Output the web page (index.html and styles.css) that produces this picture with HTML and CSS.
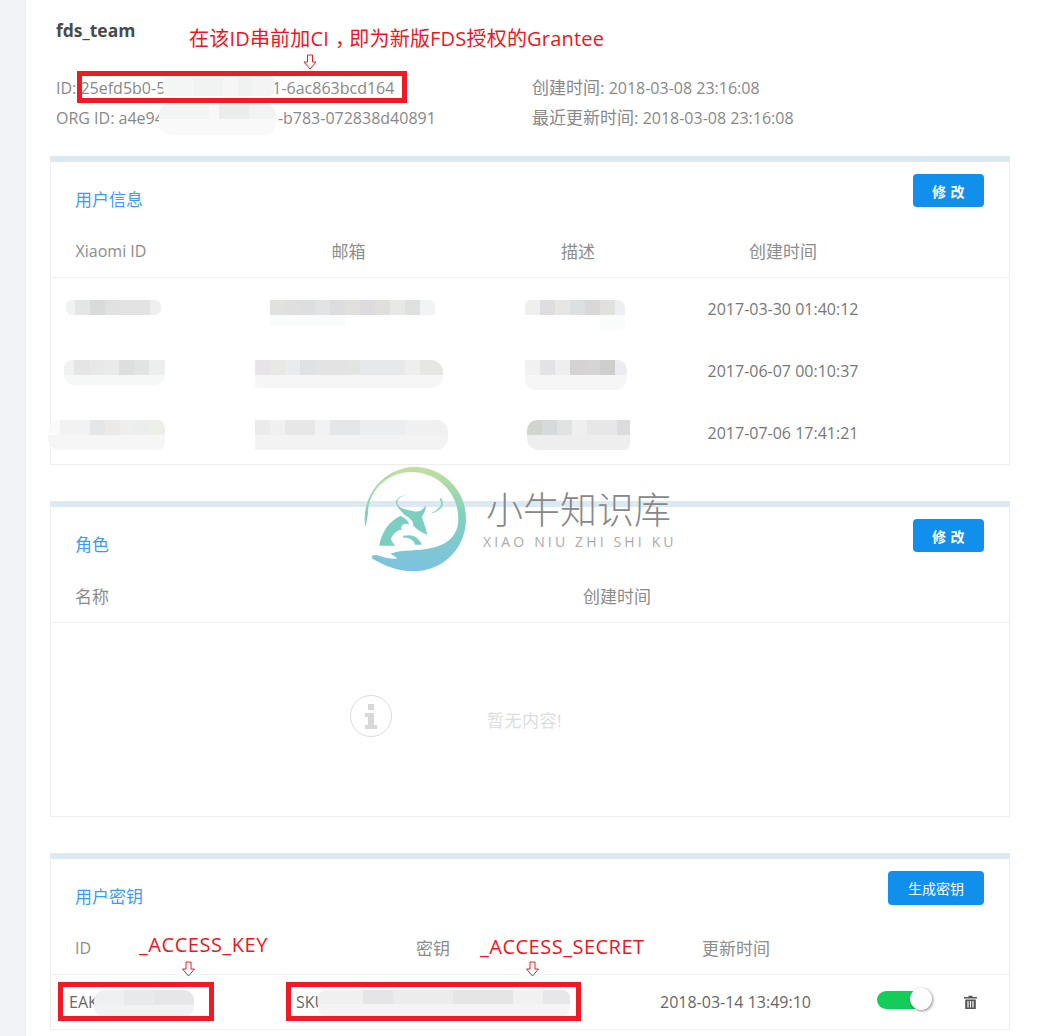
FILE: index.html
```html
<!DOCTYPE html>
<html lang="zh">
<head>
    <meta charset="utf-8">
    <title>fds_team</title>
    <link rel="stylesheet" href="styles.css">
</head>
<body>
<div class="page">
    <div class="sidebar"></div>

    <main class="main">
        <header class="info">
            <h1 class="team-name">fds_team</h1>
            <div class="info-grid">
                <div class="info-line">ID: 25efd5b0-5<span class="gap-id"></span>1-6ac863bcd164</div>
                <div class="info-line"><span class="cjk">创建时间:</span> 2018-03-08 23:16:08</div>
                <div class="info-line">ORG ID: a4e94<span class="gap-org"></span>-b783-072838d40891</div>
                <div class="info-line"><span class="cjk">最近更新时间:</span> 2018-03-08 23:16:08</div>
            </div>
        </header>

        <section class="panel">
            <div class="panel-head">
                <h2 class="panel-title">用户信息</h2>
                <button class="btn btn-wide-text">修 改</button>
            </div>
            <div class="row users head">
                <span>Xiaomi ID</span><span>邮箱</span><span>描述</span><span>创建时间</span>
            </div>
            <div class="row users data">
                <span></span><span></span><span></span><span>2017-03-30 01:40:12</span>
            </div>
            <div class="row users data">
                <span></span><span></span><span></span><span>2017-06-07 00:10:37</span>
            </div>
            <div class="row users data">
                <span></span><span></span><span></span><span>2017-07-06 17:41:21</span>
            </div>
        </section>

        <section class="panel">
            <div class="panel-head">
                <h2 class="panel-title">角色</h2>
                <button class="btn btn-wide-text">修 改</button>
            </div>
            <div class="row roles head">
                <span>名称</span><span>创建时间</span>
            </div>
            <div class="empty">
                <svg class="empty-icon" width="42" height="42" viewBox="0 0 42 42">
                    <circle cx="21" cy="21" r="20.5" fill="none" stroke="#dcdcdc" stroke-width="1"/>
                    <rect x="18" y="9" width="6" height="6" fill="#d8d8d8"/>
                    <path d="M15 18h9v12h3v4H15v-4h3v-8h-3z" fill="#d8d8d8"/>
                </svg>
                <span class="empty-text">暂无内容!</span>
            </div>
        </section>

        <section class="panel">
            <div class="panel-head">
                <h2 class="panel-title">用户密钥</h2>
                <button class="btn btn-tall">生成密钥</button>
            </div>
            <div class="row keys-head head">
                <span>ID</span><span>密钥</span><span>更新时间</span>
            </div>
            <div class="row keys-row">
                <span>EAK</span>
                <span>SKU</span>
                <span>2018-03-14 13:49:10</span>
                <span class="toggle"><span class="knob"></span></span>
                <svg class="trash" width="13" height="14" viewBox="0 0 13 14">
                    <path d="M4.5 2V.8h4V2H13v1.6H0V2z" fill="#555"/>
                    <path d="M1.2 4.4h10.6V14H1.2zM3.4 6v6.4h1.2V6zm2.5 0v6.4h1.2V6zm2.5 0v6.4h1.2V6z" fill="#555" fill-rule="evenodd"/>
                </svg>
            </div>
        </section>
    </main>

    <!-- watermark -->
    <svg class="wm-logo" width="108" height="108" viewBox="60 45 325 325">
        <defs>
            <linearGradient id="wmGrad" x1="0" y1="0" x2="0" y2="1">
                <stop offset="0" stop-color="#c3e09c"/>
                <stop offset="0.45" stop-color="#80d2bb"/>
                <stop offset="1" stop-color="#7dc1e2"/>
            </linearGradient>
        </defs>
        <path fill="url(#wmGrad)" d="M76 232A157 157 0 0 1 222 50A157 157 0 0 1 379 207A157 157 0 0 1 222 365C170 365 130 345 97 327C92 318 100 314 110 316C130 322 150 330 172 326C165 318 155 316 152 312C170 304 190 302 215 302C290 300 356 280 356 207C356 130 295 66 215 66C140 66 84 125 84 190C82 205 80 220 76 232Z"/>
        <path fill="#7ccfc0" d="M205 133C185 138 165 148 175 165C182 178 205 180 222 184C235 187 248 184 258 165C260 180 252 192 246 200C252 220 260 240 263 256C248 250 232 240 220 228C222 215 212 205 195 196C186 185 172 175 168 158C168 146 185 136 205 133Z"/>
        <path fill="#7ccfc0" d="M118 288C124 252 145 215 182 198C195 205 205 212 208 225C190 215 180 232 186 240C170 240 160 255 155 262C150 272 162 282 166 288Z"/>
        <path fill="#7ccfc0" d="M190 258C222 250 240 268 246 285L226 285C222 270 205 262 190 264Z"/>
        <path fill="#8fd6c4" d="M302 142C320 165 305 182 272 192C295 178 312 165 300 150Z"/>
    </svg>
    <div class="wm-name">小牛知识库</div>
    <div class="wm-sub">XIAO NIU ZHI SHI KU</div>

    <!-- mosaic over the hidden values -->
    <div class="patch p-top1"></div>
    <div class="patch p-top2"></div>
    <div class="patch p-11"></div>
    <div class="patch p-12"></div>
    <div class="patch p-13"></div>
    <div class="patch p-21"></div>
    <div class="patch p-22"></div>
    <div class="patch p-23"></div>
    <div class="patch p-31"></div>
    <div class="patch p-32"></div>
    <div class="patch p-33"></div>
    <div class="patch p-eak"></div>
    <div class="patch p-sku"></div>

    <!-- red notes -->
    <div class="note note-grantee">在该ID串前加CI<span class="note-comma">，</span>即为新版FDS授权的Grantee</div>
    <div class="note note-key">_ACCESS_KEY</div>
    <div class="note note-secret">_ACCESS_SECRET</div>
    <div class="box box-id"></div>
    <div class="box box-eak"></div>
    <div class="box box-sku"></div>
    <svg class="arrow arrow-id" width="14" height="16" viewBox="0 0 14 16">
        <path d="M4.5 1h5v7h3.500L7 15 1 8h3.500z" fill="#fff" stroke="#ed1c24" stroke-width="1"/>
    </svg>
    <svg class="arrow arrow-key" width="25" height="16" viewBox="0 0 25 16">
        <rect width="25" height="16" fill="#fff"/>
        <path d="M10 1h5v7h3.500L12.500 15 6.500 8H10z" fill="#fff" stroke="#ed1c24" stroke-width="1"/>
    </svg>
    <svg class="arrow arrow-secret" width="25" height="16" viewBox="0 0 25 16">
        <rect width="25" height="16" fill="#fff"/>
        <path d="M10 1h5v7h3.500L12.500 15 6.500 8H10z" fill="#fff" stroke="#ed1c24" stroke-width="1"/>
    </svg>
</div>
</body>
</html>
```

FILE: styles.css
```css
* {
    box-sizing: border-box;
}
body {
    margin: 0;
    background-color: #ffffff;
    font-family: "Open Sans", "Noto Sans CJK SC", sans-serif;
    font-size: 16px;
    color: #888888;
}
.page {
    position: relative;
    display: flex;
    height: 1036px;
    overflow: hidden;
}
.sidebar {
    width: 26px;
    flex-shrink: 0;
    background-color: #f1f3f6;
    border-right: 1px solid #eceef1;
}
.main {
    width: 984px;
    padding-left: 24px;
}

/* top info */
.info {
    height: 156px;
    padding: 19px 0 0 6px;
}
.team-name {
    margin: 0;
    font-size: 17.5px;
    line-height: 22px;
    font-weight: 700;
    color: #4a4a4a;
}
.info-grid {
    display: grid;
    grid-template-columns: 476px 1fr;
    grid-auto-rows: 30px;
    margin-top: 32px;
}
.info-line {
    line-height: 30px;
    white-space: nowrap;
}
.cjk {
    font-size: 17px;
}
.gap-id {
    display: inline-block;
    width: 107px;
}
.gap-org {
    display: inline-block;
    width: 114px;
}

/* panels */
.panel {
    margin-bottom: 36px;
    border: 1px solid #eeeeee;
    border-top: 6px solid #dce9f3;
}
.panel-head {
    display: flex;
    justify-content: space-between;
    align-items: flex-start;
    height: 64px;
    padding: 12px 25px 0 24px;
}
.panel-title {
    margin: 14px 0 0;
    font-size: 17px;
    line-height: 24px;
    font-weight: 400;
    color: #3b9cf5;
}
.btn {
    height: 33px;
    padding: 0;
    border: none;
    border-radius: 4px;
    background-color: #118fec;
    color: white;
    font-family: inherit;
    font-size: 14px;
}
.btn-wide-text {
    width: 71px;
    font-weight: 700;
    letter-spacing: 0.5px;
}
.btn-tall {
    width: 96px;
    height: 34px;
}

/* rows */
.row {
    display: grid;
    align-items: center;
}
.head {
    height: 52px;
    padding-bottom: 2px;
    border-bottom: 1px solid #eeeeee;
    font-size: 17px;
    color: #8c8c8c;
}
.users {
    grid-template-columns: 120px 355px 104px 306px 1fr;
    text-align: center;
}
.users.head span:first-child {
    font-size: 16px;
}
.data {
    height: 62px;
    color: #777777;
}
.roles {
    grid-template-columns: 508px 1fr;
    padding-left: 24px;
}
.empty {
    display: flex;
    align-items: flex-start;
    gap: 95px;
    height: 193px;
    padding: 72px 0 0 299px;
}
.empty-text {
    margin-top: 12px;
    font-size: 17px;
    letter-spacing: 0.5px;
    color: #dddddd;
}
.keys-head {
    grid-template-columns: 341px 286px 1fr;
    padding-left: 24px;
}
.keys-head span:first-child {
    font-size: 16px;
}
.keys-row {
    grid-template-columns: 227px 364px 217px 87px 1fr;
    height: 54px;
    padding-left: 18px;
    color: #666666;
}
.toggle {
    position: relative;
    display: block;
    width: 54px;
    height: 18px;
    margin-top: -4px;
    border-radius: 9px;
    background-color: #14cc5a;
}
.knob {
    position: absolute;
    top: -3px;
    right: -1px;
    width: 22px;
    height: 22px;
    border-radius: 50%;
    background-color: #ffffff;
    box-shadow: 1px 1px 3px rgba(0, 0, 0, 0.45);
}

/* watermark */
.wm-logo {
    position: absolute;
    left: 360px;
    top: 465px;
}
.wm-name {
    position: absolute;
    left: 486px;
    top: 487px;
    font-size: 37px;
    line-height: 46px;
    font-weight: 300;
    color: #888888;
    white-space: nowrap;
}
.wm-sub {
    position: absolute;
    left: 483px;
    top: 533px;
    font-size: 14px;
    line-height: 18px;
    letter-spacing: 3.15px;
    color: #aaaaaa;
    white-space: nowrap;
}

/* mosaic */
.patch {
    position: absolute;
    background-repeat: no-repeat;
    border-radius: 6px;
}
.p-top1 {
    left: 163px;
    top: 76px;
    width: 112px;
    height: 20px;
    background-color: #f3f4f4;
    background-image: linear-gradient(90deg, #f4f5f5 0 30px, #f1f2f2 30px 60px, #f6f6f6 60px 75px, #f0f1f1 75px 90px, #f4f4f4 90px);
}
.p-top2 {
    left: 159px;
    top: 103px;
    width: 117px;
    height: 32px;
    border-radius: 12px;
    background-color: #f9f9f9;
    background-image: linear-gradient(90deg, #f3f4f4 0 50px, #f8f8f8 50px 60px, #ebecec 60px 90px, #f2f3f3 90px);
    background-size: 100% 16px;
}
.p-11 {
    left: 66px;
    top: 300px;
    width: 95px;
    height: 15px;
    background-image: linear-gradient(90deg, #f0f1f1 0 9px, #e4e5e5 9px 24px, #d8dbda 24px 39px, #e2e1e2 39px 54px, #e3e3e3 54px 69px, #e4e3e4 69px 84px, #f0eff0 84px);
}
.p-12 {
    left: 270px;
    top: 300px;
    width: 165px;
    height: 26px;
    border-radius: 0 6px 0 0;
    background-image: linear-gradient(90deg, #e1e1e0 0 15px, #dfdfe0 15px 30px, #dddedf 30px 45px, #e2e4e3 45px 60px, #dddddf 60px 75px, #e0e1df 75px 90px, #dddbdf 90px 105px, #dfe0dd 105px 120px, #e8e8e6 120px 135px, #dfe0e0 135px 150px, #f2f3f4 150px), linear-gradient(#fafbfb, #fafbfb);
    background-size: 100% 15px, 75px 11px;
    background-position: 0 0, 0 15px;
}
.p-13 {
    left: 525px;
    top: 300px;
    width: 100px;
    height: 30px;
    border-radius: 6px 8px 6px 0;
    background-image: linear-gradient(90deg, #efefee 0 15px, #dfdddf 15px 30px, #e6e6e4 30px 45px, #dde0e0 45px 60px, #d9d7d7 60px 75px, #e0e0de 75px 90px, #eceef1 90px), linear-gradient(#fafbfb, #fafbfb);
    background-size: 100% 15px, 25px 15px;
    background-position: 0 0, 100% 15px;
}
.p-21 {
    left: 64px;
    top: 360px;
    width: 101px;
    height: 25px;
    border-radius: 8px 0 10px 10px;
    background-color: #f6f7f7;
    background-image: linear-gradient(90deg, #f0f1f1 0 10px, #e5e5e5 10px 25px, #e7e8e8 25px 40px, #eaeaea 40px 55px, #dcdfde 55px 70px, #e2e3e3 70px 85px, #ecefee 85px);
    background-size: 100% 15px;
}
.p-22 {
    left: 255px;
    top: 360px;
    width: 188px;
    height: 28px;
    border-radius: 0 12px 12px 4px;
    background-color: #f6f6f7;
    background-image: linear-gradient(90deg, #e6e4e6 0 15px, #e8e8e6 15px 30px, #eaebee 30px 45px, #dfe1e2 45px 60px, #e3e3e3 60px 90px, #e3e5e2 90px 105px, #e6e8ea 105px 150px, #eeeeef 150px 165px, #e6e7e4 165px);
    background-size: 100% 15px;
}
.p-23 {
    left: 525px;
    top: 360px;
    width: 102px;
    height: 30px;
    border-radius: 0 10px 12px 10px;
    background-color: #f6f6f6;
    background-image: linear-gradient(90deg, #f1f1f1 0 15px, #e3e3e6 15px 30px, #eeeeef 30px 45px, #d4d2d2 45px 60px, #d6d4d4 60px 75px, #cfcece 75px 90px, #eaecef 90px);
    background-size: 100% 15px;
}
.p-31 {
    left: 48px;
    top: 420px;
    width: 117px;
    height: 30px;
    border-radius: 12px 8px 8px 12px;
    background-color: #f6f6f6;
    background-image: linear-gradient(90deg, #fafafa 0 12px, #f2f2f2 12px 42px, #e4e6e8 42px 57px, #eceae8 57px 72px, #eeeeee 72px 87px, #eceeee 87px 102px, #eeeeea 102px);
    background-size: 100% 15px;
}
.p-32 {
    left: 255px;
    top: 420px;
    width: 193px;
    height: 30px;
    border-radius: 0 12px 12px 0;
    background-color: #f3f3f3;
    background-image: linear-gradient(90deg, #ebebeb 0 15px, #f0f0f0 15px 30px, #e7e7e7 30px 60px, #f2f2f2 60px 75px, #e5e6e8 75px 105px, #ecedee 105px 150px, #f0f0f0 150px);
    background-size: 100% 15px;
}
.p-33 {
    left: 527px;
    top: 420px;
    width: 103px;
    height: 30px;
    border-radius: 10px 0 6px 12px;
    background-color: #eeeeef;
    background-image: linear-gradient(90deg, #d2d4d0 0 15px, #d5dadb 15px 30px, #e1e2e2 30px 45px, #efefef 45px 60px, #e7e7e7 60px 90px, #dcdcde 90px);
    background-size: 100% 15px;
}
.p-eak {
    left: 94px;
    top: 990px;
    width: 100px;
    height: 27px;
    border-radius: 10px;
    background-color: #f1f2f2;
    background-image: linear-gradient(90deg, #eef0f2 0 30px, #e8e9ea 30px 60px, #e6e6e8 60px);
    background-size: 100% 15px;
}
.p-sku {
    left: 318px;
    top: 990px;
    width: 252px;
    height: 26px;
    border-radius: 8px;
    background-color: #f4f4f4;
    background-image: linear-gradient(90deg, #f0f0f1 0 45px, #e5e5e8 45px 75px, #ececec 75px 135px, #e5e5e5 135px 195px, #f1f1f1 195px 225px, #e7e7e9 225px);
    background-size: 100% 14px;
}

/* annotations */
.note {
    position: absolute;
    color: #f0141e;
    font-size: 20px;
    line-height: 28px;
    white-space: nowrap;
}
.note-grantee {
    left: 189px;
    top: 25px;
    letter-spacing: 0.2px;
}
.note-comma {
    padding-left: 6px;
    letter-spacing: -5.8px;
}
.note-key {
    left: 139px;
    top: 931px;
    letter-spacing: 0.55px;
}
.note-secret {
    left: 480px;
    top: 933px;
    letter-spacing: 0.5px;
}
.box {
    position: absolute;
    border: 5px solid #ed1c24;
}
.box-id {
    left: 77px;
    top: 71px;
    width: 330px;
    height: 32px;
}
.box-eak {
    left: 58px;
    top: 982px;
    width: 156px;
    height: 39px;
}
.box-sku {
    left: 286px;
    top: 982px;
    width: 295px;
    height: 39px;
}
.arrow {
    position: absolute;
}
.arrow-id {
    left: 303px;
    top: 54px;
}
.arrow-key {
    left: 176px;
    top: 961px;
}
.arrow-secret {
    left: 520px;
    top: 961px;
}
```
